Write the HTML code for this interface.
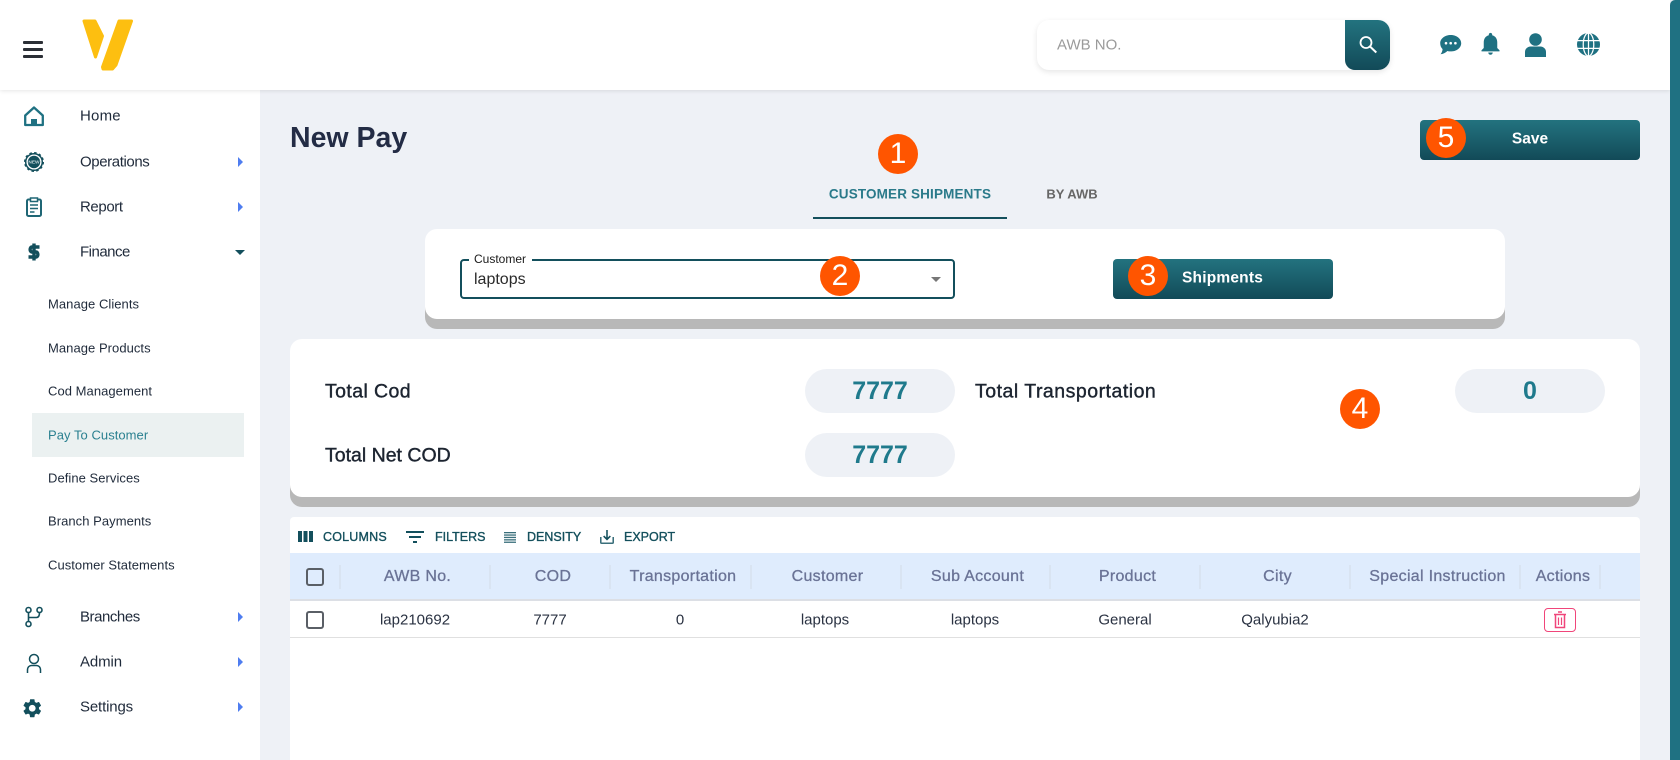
<!DOCTYPE html>
<html lang="en"><head><meta charset="utf-8"><title>New Pay</title>
<style>
*{box-sizing:border-box}
html,body{margin:0;padding:0;width:1680px;height:760px;overflow:hidden;background:#eef1f6;font-family:"Liberation Sans",Arial,sans-serif}
.a{position:absolute}
.t{position:absolute;white-space:nowrap;line-height:1;transform:translateY(-50%)}
.c{position:absolute;white-space:nowrap;line-height:1;transform:translate(-50%,-50%)}
.nav{font-size:15px;color:#1f2a3a;left:80px}
.sub{font-size:13px;color:#1f2a3a;left:48px;letter-spacing:.05px}
.arr{position:absolute;left:238px;width:0;height:0;border-left:5.5px solid #4f7df0;border-top:5px solid transparent;border-bottom:5px solid transparent;transform:translateY(-50%)}
.num{position:absolute;width:40px;height:40px;border-radius:50%;background:#ff5500;color:#fff;font-size:30px;line-height:40px;text-align:center;font-family:"Liberation Sans",Arial,sans-serif}
.btn{position:absolute;background:linear-gradient(#23737f,#124a58);border-radius:4px}
.card{position:absolute;background:#fff;border-radius:12px;box-shadow:0 10px 0 #b8b8b8}
.pill{position:absolute;width:150px;height:44px;border-radius:22px;background:#eef1f6;color:#1f7a8c;font-size:25px;font-weight:bold;line-height:45px;text-align:center}
.lab{font-size:19.5px;color:#1c2430;-webkit-text-stroke:.4px currentColor}
.tb{font-size:12.5px;color:#134f5c;-webkit-text-stroke:.35px currentColor}
.h{font-size:16px;letter-spacing:.3px;color:#6a7396;-webkit-text-stroke:.3px currentColor}
.r{font-size:15px;color:#2a3242}
.sep{position:absolute;top:565px;width:2px;height:24px;background:#d9e4f2}
.cb{position:absolute;left:306px;width:18px;height:18px;border:2px solid #5a5f66;border-radius:3px;background:transparent}
svg{position:absolute;overflow:visible}
</style></head><body>

<!-- sidebar -->
<div class="a" style="left:0;top:90px;width:260px;height:670px;background:#fff"></div>
<!-- header -->
<div class="a" style="left:0;top:0;width:1670px;height:90px;background:#fff;box-shadow:0 1px 4px rgba(0,0,0,.1)"></div>
<!-- scrollbar -->
<div class="a" style="left:1670px;top:0;width:10px;height:760px;background:#1f7182;border-radius:5px 0 0 0"></div>

<!-- hamburger -->
<div class="a" style="left:23px;top:41px;width:20px;height:3px;background:#2b2f36;border-radius:1px"></div>
<div class="a" style="left:23px;top:48px;width:20px;height:3px;background:#2b2f36;border-radius:1px"></div>
<div class="a" style="left:23px;top:55px;width:20px;height:3px;background:#2b2f36;border-radius:1px"></div>

<!-- logo -->
<svg style="left:0;top:0" width="150" height="90"><g fill="#fdbf10" stroke="#fdbf10" stroke-width="3" stroke-linejoin="round">
<polygon points="84,21 95,21 102.5,36 95.5,57"/>
<polygon points="119,21 131.5,21 116,65 112.5,69 103,69 102.5,67"/></g></svg>

<!-- search -->
<div class="a" style="left:1037px;top:20px;width:353px;height:50px;background:#fff;border-radius:12px;box-shadow:0 2px 6px rgba(0,0,0,.1)"></div>
<div class="t" style="left:1057px;top:44.5px;font-size:15px;color:#9a9a9a">AWB NO.</div>
<div class="a" style="left:1345px;top:20px;width:45px;height:50px;background:linear-gradient(#23737f,#124a58);border-radius:0 12px 12px 10px"></div>
<svg style="left:1359px;top:36px" width="18" height="17" viewBox="0 0 18 17" fill="none" stroke="#fff"><circle cx="7" cy="6.5" r="5.5" stroke-width="1.8"/><path d="M11 10.5l6.3 6" stroke-width="2"/></svg>

<!-- top icons -->
<svg style="left:1440px;top:34.5px" width="22" height="20" viewBox="0 0 22 20"><path fill="#1f7182" d="M10.7 0C16.5 0 21.2 3.6 21.2 8.2S16.5 16.4 10.7 16.4c-1.2 0-2.3-.15-3.3-.45C5.8 17.6 3.4 19 .5 19.3c1-1.1 1.8-2.6 2.1-5.2C1 12.6.2 10.5.2 8.2.2 3.6 4.9 0 10.7 0z"/><circle cx="6" cy="8.2" r="1.3" fill="#fff"/><circle cx="10.7" cy="8.2" r="1.3" fill="#fff"/><circle cx="15.4" cy="8.2" r="1.3" fill="#fff"/></svg>
<svg style="left:1477px;top:30px" width="27" height="27" viewBox="0 0 24 24" fill="#1f7182"><path d="M12 22c1.1 0 2-.9 2-2h-4c0 1.1.89 2 2 2zm6-6v-5c0-3.07-1.64-5.64-4.5-6.32V4c0-.83-.67-1.5-1.5-1.5s-1.5.67-1.5 1.5v.68C7.63 5.36 6 7.92 6 11v5l-2 2v1h16v-1l-2-2z"/></svg>
<svg style="left:1525px;top:33px" width="22" height="24" viewBox="0 0 22 24" fill="#1f7182"><circle cx="10.5" cy="6.5" r="6.3"/><path d="M0 24v-5c0-3.5 3-5.5 5.5-5.5h10c2.5 0 5.5 2 5.500 5.500v5z"/></svg>
<svg style="left:1576.5px;top:32.5px" width="23" height="23" viewBox="0 0 24 24"><circle cx="12" cy="12" r="12" fill="#1f7182"/><g stroke="#fff" stroke-width="1.3" fill="none"><ellipse cx="12" cy="12" rx="5.5" ry="12"/><path d="M12 0v24M0 8h24M0 16h24"/></g></svg>

<!-- nav icons -->
<svg style="left:24px;top:106px" width="20" height="20" viewBox="0 0 20 20"><path fill="none" stroke="#1f7182" stroke-width="2.3" stroke-linejoin="round" d="M1.2 9.5 10 1.5l8.800 8V19H1.200z"/><rect x="7" y="13" width="6" height="6.500" fill="#1f7182"/></svg>
<svg style="left:24px;top:152px" width="20" height="20" viewBox="0 0 20 20"><circle cx="10" cy="10" r="8.300" fill="none" stroke="#134f5c" stroke-width="1.500"/><circle cx="10" cy="10" r="9.200" fill="none" stroke="#134f5c" stroke-width="1.600" stroke-dasharray="2.500 2.300"/><circle cx="10" cy="10" r="6.200" fill="#134f5c"/><text x="10" y="11.700" font-size="4.800" font-weight="bold" text-anchor="middle" fill="#c4d6da" font-family="Liberation Sans">NEW</text></svg>
<svg style="left:26px;top:197px" width="16" height="20" viewBox="0 0 16 20"><rect x="1" y="2.500" width="14" height="16.500" rx="1.500" fill="none" stroke="#1f6675" stroke-width="2"/><rect x="4.500" y="1" width="7" height="3.500" fill="#fff" stroke="#1f6675" stroke-width="1.500"/><path d="M4 8h8M4 11.500h8M4 15h4.500" stroke="#1f6675" stroke-width="1.600"/></svg>
<svg style="left:28px;top:242px" width="12" height="20" viewBox="0 0 12 20" fill="none" stroke="#134f5c" stroke-width="3.400"><path d="M11.500 5H4C1.500 5 1.500 10 4 10H8C10.500 10 10.500 15 8 15H.5"/><path d="M6 1.500V18.500"/></svg>
<svg style="left:25px;top:606px" width="19" height="22" viewBox="0 0 19 22" fill="none" stroke="#134f5c" stroke-width="1.600"><circle cx="3.500" cy="4" r="2.500"/><circle cx="14.500" cy="4" r="2.500"/><circle cx="3.500" cy="18" r="2.500"/><path d="M3.500 6.500v9M3.500 11.500h8c2 0 3-1.500 3-5"/></svg>
<svg style="left:26px;top:653px" width="16" height="20" viewBox="0 0 16 20" fill="none" stroke="#134f5c" stroke-width="1.500"><circle cx="8" cy="6" r="4.500"/><path d="M1.500 20v-3c0-3 2-4.500 4-4.500h5c2 0 4 1.500 4 4.500v3"/></svg>
<svg style="left:21.25px;top:696.75px" width="22.5" height="22.5" viewBox="0 0 24 24" fill="#134f5c"><path d="M19.14 12.94c.04-.3.06-.61.06-.94 0-.32-.02-.64-.07-.94l2.03-1.58c.18-.14.23-.41.12-.61l-1.92-3.32c-.12-.22-.37-.29-.59-.22l-2.39.96c-.5-.38-1.03-.7-1.62-.94l-.36-2.54c-.04-.24-.24-.41-.48-.41h-3.84c-.24 0-.43.17-.47.41l-.36 2.54c-.59.24-1.13.57-1.62.94l-2.39-.96c-.22-.08-.47 0-.59.22L2.74 8.87c-.12.21-.08.47.12.61l2.03 1.58c-.05.3-.09.63-.09.94s.02.64.07.94l-2.03 1.58c-.18.14-.23.41-.12.61l1.92 3.32c.12.22.37.29.59.22l2.39-.96c.5.38 1.03.7 1.62.94l.36 2.54c.05.24.24.41.48.41h3.84c.24 0 .44-.17.47-.41l.36-2.54c.59-.24 1.13-.56 1.62-.94l2.39.96c.22.08.47 0 .59-.22l1.92-3.32c.12-.22.07-.47-.12-.61l-2.01-1.58zM12 15.6c-1.98 0-3.6-1.62-3.6-3.6s1.62-3.6 3.6-3.6 3.6 1.62 3.6 3.6-1.62 3.6-3.6 3.6z"/></svg>

<!-- nav text -->
<div class="t nav" style="top:116px;letter-spacing:.2px">Home</div>
<div class="t nav" style="top:162px;letter-spacing:-.4px">Operations</div><div class="arr" style="top:162px"></div>
<div class="t nav" style="top:207px;letter-spacing:-.4px">Report</div><div class="arr" style="top:207px"></div>
<div class="t nav" style="top:252px;letter-spacing:-.5px">Finance</div>
<div class="a" style="left:235px;top:250px;width:0;height:0;border-top:5px solid #134f5c;border-left:5px solid transparent;border-right:5px solid transparent"></div>
<div class="a" style="left:32px;top:413px;width:212px;height:44px;background:#ebf1f1"></div>
<div class="t sub" style="top:304px">Manage Clients</div>
<div class="t sub" style="top:347.5px">Manage Products</div>
<div class="t sub" style="top:391px">Cod Management</div>
<div class="t sub" style="top:434.5px;color:#2a8090">Pay To Customer</div>
<div class="t sub" style="top:478px">Define Services</div>
<div class="t sub" style="top:521px">Branch Payments</div>
<div class="t sub" style="top:565px">Customer Statements</div>
<div class="t nav" style="top:617px;letter-spacing:-.45px">Branches</div><div class="arr" style="top:617px"></div>
<div class="t nav" style="top:662px;letter-spacing:-.1px">Admin</div><div class="arr" style="top:662px"></div>
<div class="t nav" style="top:707px;letter-spacing:-.15px">Settings</div><div class="arr" style="top:707px"></div>

<!-- title and save -->
<div class="t" style="left:290px;top:138px;font-size:28.5px;font-weight:bold;color:#232c45">New Pay</div>
<div class="btn" style="left:1420px;top:120px;width:220px;height:40px"></div>
<div class="c" style="left:1530px;top:139px;font-size:15.5px;font-weight:bold;color:#fff">Save</div>

<!-- tabs -->
<div class="c" style="left:910px;top:194px;font-size:13.5px;letter-spacing:.15px;font-weight:bold;color:#2a7a8a">CUSTOMER SHIPMENTS</div>
<div class="c" style="left:1072px;top:194px;font-size:13px;font-weight:bold;color:#666">BY AWB</div>
<div class="a" style="left:813px;top:217px;width:194px;height:2px;background:#134f5c"></div>

<!-- card 1 -->
<div class="card" style="left:425px;top:229px;width:1080px;height:90px"></div>
<div class="a" style="left:460px;top:259px;width:495px;height:40px;border:2px solid #134f5c;border-radius:4px"></div>
<div class="a" style="left:469px;top:252px;width:63px;height:12px;background:#fff"></div>
<div class="t" style="left:474px;top:259px;font-size:12px;color:#1a1a1a">Customer</div>
<div class="t" style="left:474px;top:280px;font-size:16px;color:#2a2a2a">laptops</div>
<div class="a" style="left:931px;top:277px;width:0;height:0;border-top:5px solid #777;border-left:5px solid transparent;border-right:5px solid transparent"></div>
<div class="btn" style="left:1113px;top:259px;width:220px;height:40px"></div>
<div class="t" style="left:1182px;top:278px;font-size:15.5px;letter-spacing:.2px;font-weight:bold;color:#fff">Shipments</div>

<!-- card 2 -->
<div class="card" style="left:290px;top:339px;width:1350px;height:158px"></div>
<div class="t lab" style="left:325px;top:392px;letter-spacing:.4px">Total Cod</div>
<div class="t lab" style="left:325px;top:456px">Total Net COD</div>
<div class="t lab" style="left:975px;top:392px;letter-spacing:.5px">Total Transportation</div>
<div class="pill" style="left:805px;top:369px">7777</div>
<div class="pill" style="left:805px;top:433px">7777</div>
<div class="pill" style="left:1455px;top:369px">0</div>

<!-- table -->
<div class="a" style="left:290px;top:517px;width:1350px;height:243px;background:#fff;border-radius:4px 4px 0 0"></div>
<svg style="left:298px;top:531px" width="15" height="11" viewBox="0 0 15 11" fill="#134f5c"><rect x="0" width="4" height="11"/><rect x="5.5" width="4" height="11"/><rect x="11" width="4" height="11"/></svg>
<svg style="left:403px;top:525px" width="24" height="24" viewBox="0 0 24 24" fill="#134f5c"><path d="M10 18h4v-2h-4v2zM3 6v2h18V6H3zm3 7h12v-2H6v2z"/></svg>
<svg style="left:504px;top:532px" width="12" height="11" viewBox="0 0 12 11" fill="#3a6f7b"><rect y="0" width="12" height="1.3"/><rect y="2.4" width="12" height="1.3"/><rect y="4.8" width="12" height="1.3"/><rect y="7.2" width="12" height="1.3"/><rect y="9.6" width="12" height="1.3"/></svg>
<svg style="left:600px;top:530px" width="14" height="14" viewBox="3 3 18 18" fill="#134f5c"><path fill="#3a6f7b" d="M19 12v7H5v-7H3v7c0 1.1.9 2 2 2h14c1.1 0 2-.9 2-2v-7h-2z"/><path d="M13 12.67l2.59-2.58L17 11.5l-5 5-5-5 1.41-1.41L11 12.67V3h2z"/></svg>
<div class="t tb" style="left:323px;top:536.5px;letter-spacing:.2px">COLUMNS</div>
<div class="t tb" style="left:435px;top:536.5px">FILTERS</div>
<div class="t tb" style="left:527px;top:536.5px">DENSITY</div>
<div class="t tb" style="left:624px;top:536.5px">EXPORT</div>

<div class="a" style="left:290px;top:553px;width:1350px;height:48px;background:#dfecfd;border-bottom:2px solid #dcdfe5"></div>
<div class="a" style="left:290px;top:637px;width:1350px;height:1px;background:#e0e0e0"></div>
<div class="sep" style="left:339px"></div><div class="sep" style="left:489px"></div><div class="sep" style="left:609px"></div><div class="sep" style="left:750px"></div><div class="sep" style="left:900px"></div><div class="sep" style="left:1049px"></div><div class="sep" style="left:1199px"></div><div class="sep" style="left:1349px"></div><div class="sep" style="left:1519px"></div><div class="sep" style="left:1599px"></div>
<div class="cb" style="top:568px"></div>
<div class="cb" style="top:611px"></div>
<div class="c h" style="left:417.5px;top:577px">AWB No.</div>
<div class="c h" style="left:553px;top:577px">COD</div>
<div class="c h" style="left:683px;top:577px">Transportation</div>
<div class="c h" style="left:827.5px;top:577px">Customer</div>
<div class="c h" style="left:977.5px;top:577px">Sub Account</div>
<div class="c h" style="left:1127.5px;top:577px">Product</div>
<div class="c h" style="left:1277.5px;top:577px">City</div>
<div class="c h" style="left:1437.5px;top:577px">Special Instruction</div>
<div class="c h" style="left:1563px;top:577px">Actions</div>
<div class="c r" style="left:415px;top:620px">lap210692</div>
<div class="c r" style="left:550px;top:620px">7777</div>
<div class="c r" style="left:680px;top:620px">0</div>
<div class="c r" style="left:825px;top:620px">laptops</div>
<div class="c r" style="left:975px;top:620px">laptops</div>
<div class="c r" style="left:1125px;top:620px">General</div>
<div class="c r" style="left:1275px;top:620px">Qalyubia2</div>
<div class="a" style="left:1544px;top:608px;width:32px;height:24px;border:1px solid #f0457a;border-radius:4px"></div>
<svg style="left:1552px;top:611px" width="16" height="18" viewBox="0 0 16 18" fill="none" stroke="#f0457a"><path stroke-width="1.5" d="M2 3.5h12M6 1h4"/><path stroke-width="1.5" d="M3.5 4v12.5h9V4"/><path stroke-width="1.2" d="M6.5 6.5v7.5M9.5 6.5v7.5"/></svg>

<!-- number badges -->
<div class="num" style="left:878px;top:134px">1</div>
<div class="num" style="left:820px;top:256px">2</div>
<div class="num" style="left:1128px;top:256px">3</div>
<div class="num" style="left:1340px;top:388.5px">4</div>
<div class="num" style="left:1426px;top:117.5px">5</div>

</body></html>
